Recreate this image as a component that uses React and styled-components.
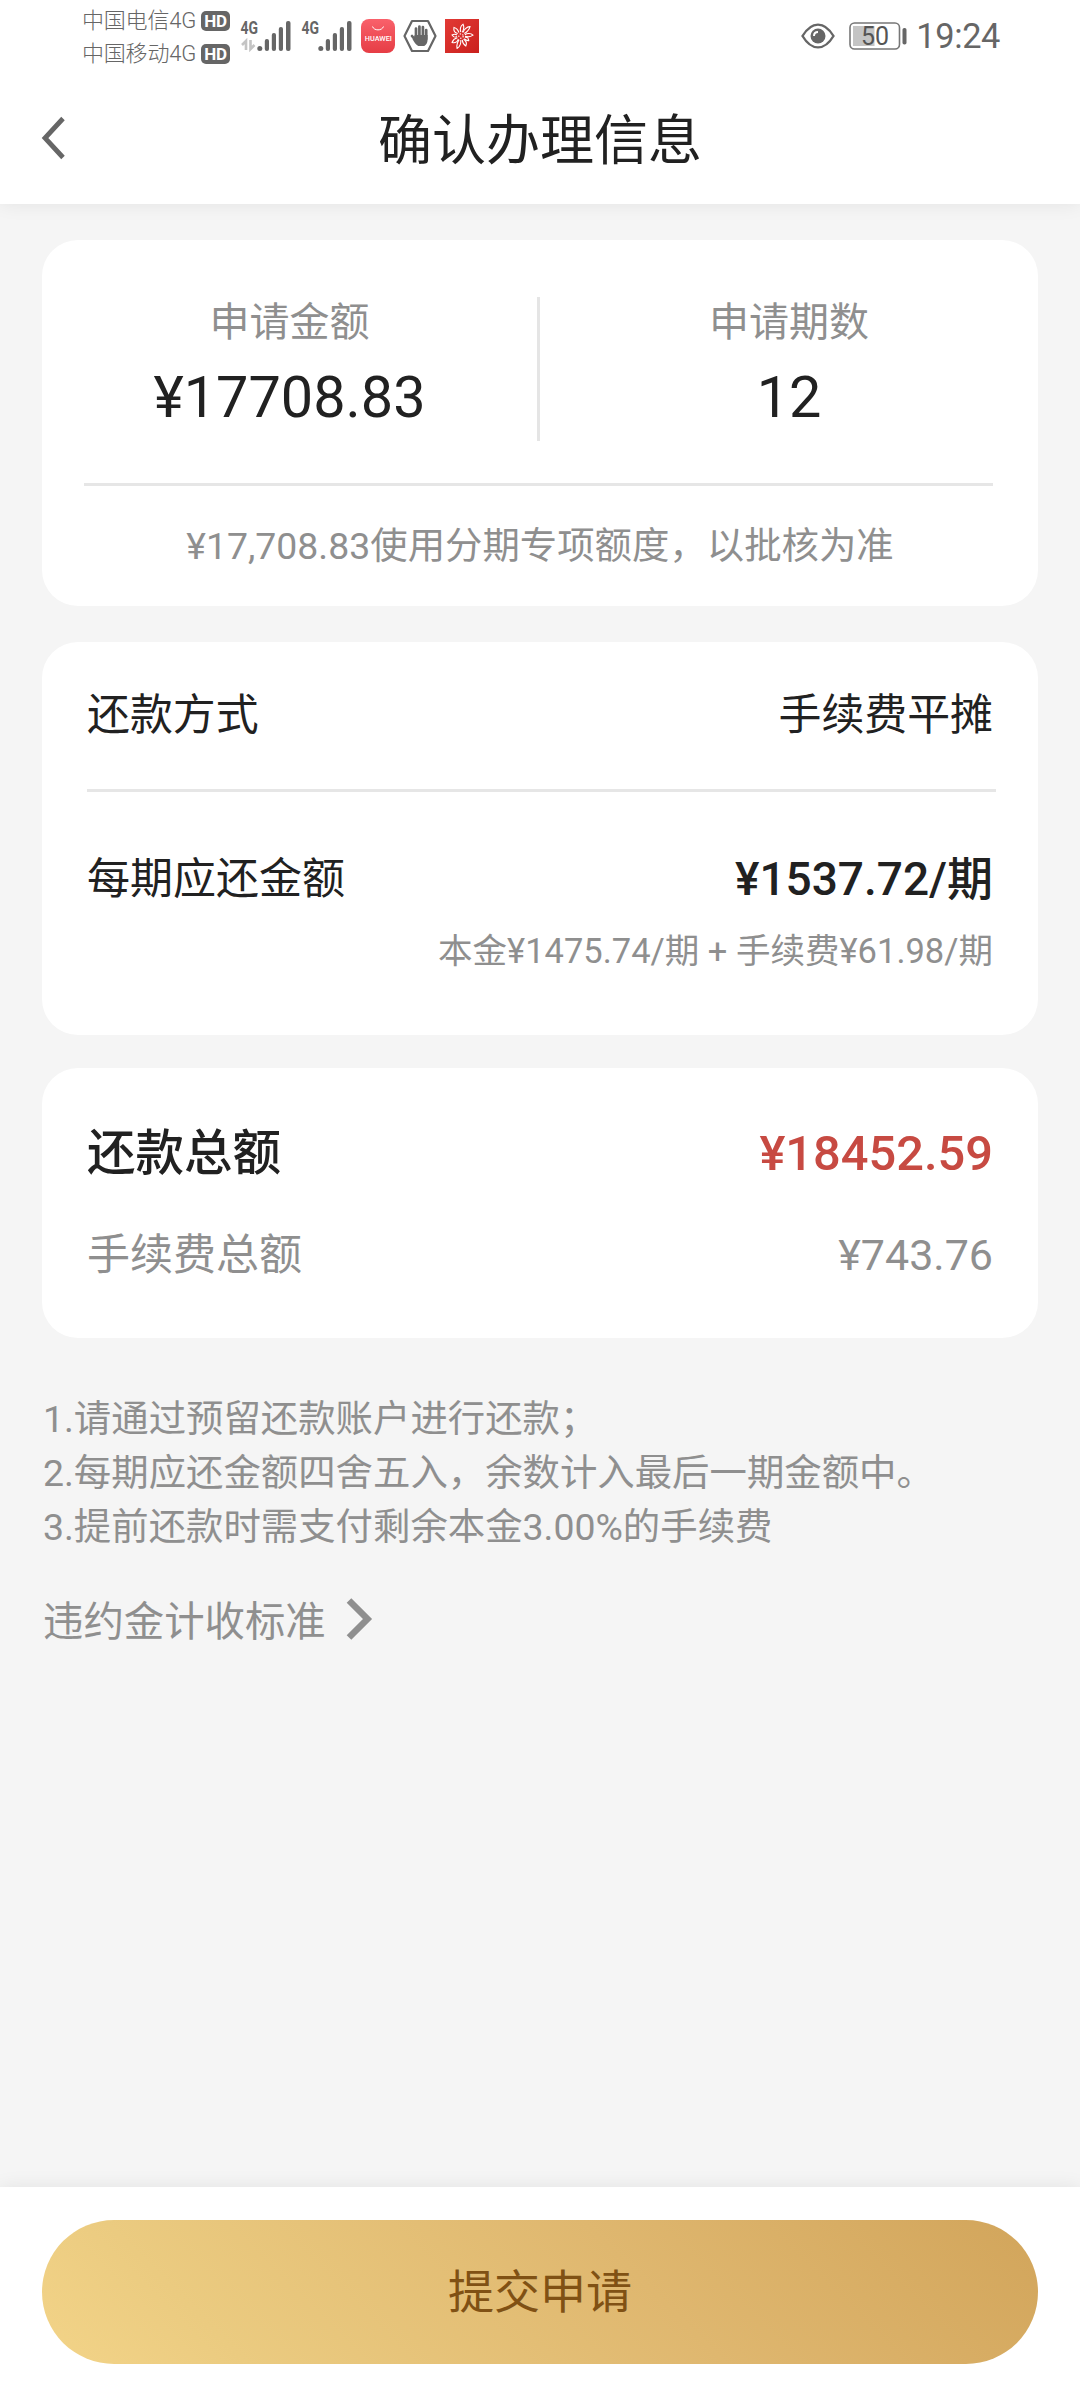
import React from "react";
import styled, { createGlobalStyle } from "styled-components";

const GlobalStyle = createGlobalStyle`
  *, *::before, *::after { box-sizing: border-box; }
  body {
    margin: 0;
    background: #f5f5f5;
    font-family: Roboto, "Noto Sans CJK SC", sans-serif;
    color: #212121;
  }
`;

const Screen = styled.div`
  width: 1080px;
  height: 2400px;
  display: flex;
  flex-direction: column;
  overflow: hidden;
  white-space: nowrap;
`;

const StatusBar = styled.div`
  height: 72px;
  flex: none;
  display: flex;
  align-items: center;
  justify-content: space-between;
  padding: 0 80px 0 82px;
  background: #fff;
  color: #666;
`;

const StatusGroup = styled.div`
  display: flex;
  align-items: center;
  gap: ${(p) => p.$gap || 0}px;
`;

const Carriers = styled.div`
  display: flex;
  flex-direction: column;
  padding-top: 2px;
`;

const Carrier = styled.div`
  height: 33px;
  display: flex;
  align-items: center;
  justify-content: space-between;
  width: 148px;
  font-size: 22px;
  font-weight: 300;
  line-height: 33px;
  letter-spacing: -0.2px;
`;

const HdBadge = styled.span`
  width: 29px;
  height: 20px;
  border-radius: 5px;
  background: #666;
  color: #fff;
  font-size: 17px;
  font-weight: 700;
  line-height: 20px;
  text-align: center;
`;

const Clock = styled.span`
  width: 84px;
  font-size: 34.4px;
  line-height: 40px;
  letter-spacing: -0.4px;
  text-align: right;
`;

const TopArea = styled.div`
  flex: none;
  background: #fff;
  box-shadow: 0 0 18px rgba(0, 0, 0, 0.08);
  z-index: 1;
`;

const Header = styled.header`
  height: 132px;
  display: grid;
  grid-template-columns: 120px 1fr 120px;
  align-items: center;
`;

const BackButton = styled.button`
  border: 0;
  padding: 0 0 0 39px;
  background: none;
  display: flex;
  height: 132px;
  align-items: center;
`;

const Title = styled.h1`
  margin: 0;
  padding-top: 8px;
  font-size: 54px;
  font-weight: 400;
  line-height: 80px;
  text-align: center;
`;

const Content = styled.main`
  flex: 1;
  display: flex;
  flex-direction: column;
  padding: 36px 42px 0;
`;

const Card = styled.section`
  height: ${(p) => p.$height}px;
  margin-bottom: ${(p) => p.$after}px;
  border-radius: 36px;
  background: #fff;
  display: flex;
  flex-direction: column;
`;

const Figures = styled.div`
  height: 243px;
  display: grid;
  grid-template-columns: 495px 3px 1fr;
`;

const Figure = styled.div`
  display: flex;
  flex-direction: column;
  align-items: center;
  padding-top: 53px;
`;

const FigureLabel = styled.span`
  font-size: 40px;
  line-height: 60px;
  color: #8f8f8f;
`;

const FigureValue = styled.span`
  margin-top: 11px;
  font-size: 57.6px;
  line-height: 68px;
`;

const Separator = styled.div`
  height: 144px;
  margin-top: 57px;
  background: #e5e5e5;
`;

const Rule = styled.div`
  height: 3px;
  flex: none;
  margin: 0 ${(p) => p.$right}px 0 ${(p) => p.$left}px;
  background: #e6e6e6;
`;

const QuotaNote = styled.p`
  margin: 0;
  height: 119px;
  font-size: 37.4px;
  line-height: 120px;
  text-align: center;
  color: #8f8f8f;
`;

const Row = styled.div`
  height: ${(p) => p.$height}px;
  margin-top: ${(p) => p.$before || 0}px;
  margin-bottom: ${(p) => p.$after || 0}px;
  padding: 0 45px;
  display: flex;
  justify-content: ${(p) => (p.$end ? "flex-end" : "space-between")};
  align-items: center;
`;

const tones = { dark: "#212121", muted: "#8f8f8f", accent: "#c74a42" };

const Text = styled.span`
  font-size: ${(p) => p.$size}px;
  font-weight: ${(p) => p.$weight || 400};
  line-height: 66px;
  color: ${(p) => tones[p.$tone || "dark"]};
`;

const Terms = styled.ol`
  list-style: none;
  margin: 0;
  padding: 0 0 0 1px;
  font-size: 37.4px;
  line-height: 54px;
  color: #8f8f8f;
`;

const TermsLink = styled.a`
  display: flex;
  align-items: center;
  gap: 18px;
  height: 60px;
  margin-top: 39px;
  padding-left: 1px;
  font-size: 40.4px;
  line-height: 60px;
  color: #8f8f8f;
`;

const ActionBar = styled.footer`
  height: 213px;
  flex: none;
  padding: 33px 42px 0;
  background: #fff;
  box-shadow: 0 0 18px rgba(0, 0, 0, 0.08);
`;

const SubmitButton = styled.button`
  display: block;
  width: 996px;
  height: 144px;
  padding: 0;
  border: 0;
  border-radius: 72px;
  background: linear-gradient(45deg, #f3d488 0%, #ebcb80 18%, #dfb76f 60%, #d2a55b 100%);
  color: #805114;
  font-family: inherit;
  font-size: 46px;
  line-height: 144px;
`;

const Icon = styled.svg`
  display: block;
  flex: none;
  overflow: visible;
`;

const ChevronIcon = styled(Icon)`
  margin-bottom: 8px;
`;

const SignalIcon = ({ traffic }) => (
  <Icon width="52" height="42" viewBox="0 -4 52 42">
    <text x="0.500" y="15" fontFamily="Roboto" fontSize="18.500" fontWeight="700" fill="#666" textLength="17.500" lengthAdjust="spacingAndGlyphs">4G</text>
    {traffic && (
      <g stroke="#c4c4c4" strokeWidth="2.600" fill="none">
        <path d="M6 31V22L2 26" />
        <path d="M10.500 21v9l4-4" />
      </g>
    )}
    <g fill="#666">
      <circle cx="19.800" cy="29.500" r="2.500" />
      <rect x="24.800" y="20" width="4.200" height="12" rx="2" />
      <rect x="31.800" y="14" width="4.200" height="18" rx="2" />
      <rect x="38.800" y="8" width="4.200" height="24" rx="2" />
      <rect x="46" y="2" width="4.500" height="30" rx="2" />
    </g>
  </Icon>
);

const HuaweiIcon = () => (
  <Icon width="34" height="34" viewBox="0 0 34 34">
    <defs>
      <linearGradient id="store" x1="0" y1="0" x2="0" y2="1">
        <stop offset="0" stopColor="#f9616b" />
        <stop offset="1" stopColor="#e63d45" />
      </linearGradient>
    </defs>
    <rect width="34" height="34" rx="8" fill="url(#store)" />
    <path d="M11.500 7.500c1.500 4.500 9.500 4.500 11 0" fill="none" stroke="#fff" strokeWidth="1" />
    <text x="3.800" y="22" fontFamily="Roboto" fontSize="7.500" fontWeight="500" fill="#fff" textLength="27" lengthAdjust="spacingAndGlyphs">HUAWEI</text>
  </Icon>
);

const HandIcon = () => (
  <Icon width="34" height="34" viewBox="0 0 34 34">
    <path d="M9 2h16l7.500 15L25 32H9L1.500 17z" fill="none" stroke="#666" strokeWidth="2.200" strokeLinejoin="round" />
    <g stroke="#666" strokeWidth="2.700" strokeLinecap="round">
      <path d="M13 9.500v9M16.400 7.500v11M19.900 8v11M23.200 11v9M9 17l4.200 5" />
    </g>
    <path d="M11.700 16h12.850v5c0 3-1.500 5-3.300 6h-6c-2.500-1.300-4-4-5.800-7l1.250-1z" fill="#666" />
  </Icon>
);

const petals = [
  [8, 12], [42, 13], [84, 12], [118, 9], [152, 11], [196, 13], [232, 11], [274, 9], [318, 11],
];

const FlowerIcon = () => (
  <Icon width="34" height="34" viewBox="0 0 34 34">
    <defs>
      <linearGradient id="bloom" x1="0" y1="0" x2="1" y2="1">
        <stop offset="0" stopColor="#e23a35" />
        <stop offset="1" stopColor="#ca201d" />
      </linearGradient>
    </defs>
    <rect width="34" height="34" fill="url(#bloom)" />
    <g transform="translate(16 17)" fill="none" stroke="#fff" strokeWidth="1.100">
      {petals.map(([angle, length]) => (
        <path
          key={angle}
          transform={`rotate(${angle})`}
          d={`M-.800-4C-2-6-2.200-${length - 2} .400-${length} 2-${length - 2.5} 1.600-6 .800-4`}
        />
      ))}
      <circle r="2.200" strokeDasharray="1.300 1.400" />
    </g>
  </Icon>
);

const EyeIcon = () => (
  <Icon width="34" height="26" viewBox="0 0 34 26">
    <path d="M1.500 13C6 5.500 11 1.600 17 1.600S28 5.500 32.500 13C28 20.500 23 24.400 17 24.400S6 20.500 1.500 13z" fill="none" stroke="#666" strokeWidth="2.400" />
    <circle cx="17" cy="13" r="7.500" fill="#666" />
    <path d="M13 13c0-2.500 1.500-4 4-4" fill="none" stroke="#fff" strokeWidth="2" />
  </Icon>
);

const BatteryIcon = () => (
  <Icon width="58" height="28" viewBox="0 0 58 28">
    <rect x="1" y="1" width="49.500" height="26" rx="4.500" fill="#fff" stroke="#777" strokeWidth="1.600" />
    <rect x="4" y="4" width="21.500" height="20" fill="#c4c4c4" />
    <text x="26" y="22.800" textAnchor="middle" fontFamily="Roboto" fontSize="25" fill="#555">50</text>
    <rect x="53.500" y="6" width="4" height="16.500" rx="1.800" fill="#666" />
  </Icon>
);

const StatusIcons = styled.div`
  display: flex;
  align-items: center;
  margin-left: 10px;
`;

const Notices = styled.div`
  display: flex;
  gap: 8px;
  margin-left: 8px;
`;

const Signals = styled.div`
  display: flex;
  gap: 9px;
`;

const Power = styled.div`
  display: flex;
  align-items: center;
  gap: 14px;
`;

export default function App() {
  return (
    <Screen>
      <GlobalStyle />
      <TopArea>
        <StatusBar>
          <StatusGroup>
            <Carriers>
              <Carrier>中国电信4G<HdBadge>HD</HdBadge></Carrier>
              <Carrier>中国移动4G<HdBadge>HD</HdBadge></Carrier>
            </Carriers>
            <StatusIcons>
              <Signals>
                <SignalIcon traffic />
                <SignalIcon />
              </Signals>
              <Notices>
                <HuaweiIcon />
                <HandIcon />
                <FlowerIcon />
              </Notices>
            </StatusIcons>
          </StatusGroup>
          <StatusGroup $gap={9}>
            <Power>
              <EyeIcon />
              <BatteryIcon />
            </Power>
            <Clock>19:24</Clock>
          </StatusGroup>
        </StatusBar>

        <Header>
          <BackButton aria-label="返回">
            <Icon width="27" height="42" viewBox="0 0 27 42">
              <path d="M24 1.500 6 21 24 40.500" fill="none" stroke="#666" strokeWidth="4.800" />
            </Icon>
          </BackButton>
          <Title>确认办理信息</Title>
        </Header>
      </TopArea>

      <Content>
        <Card $height={366} $after={36}>
          <Figures>
            <Figure>
              <FigureLabel>申请金额</FigureLabel>
              <FigureValue>¥17708.83</FigureValue>
            </Figure>
            <Separator />
            <Figure>
              <FigureLabel>申请期数</FigureLabel>
              <FigureValue>12</FigureValue>
            </Figure>
          </Figures>
          <Rule $left={42} $right={45} />
          <QuotaNote>¥17,708.83使用分期专项额度，以批核为准</QuotaNote>
        </Card>

        <Card $height={393} $after={33}>
          <Row $height={145} $after={2}>
            <Text $size={42.9}>还款方式</Text>
            <Text $size={42.9}>手续费平摊</Text>
          </Row>
          <Rule $left={45} $right={42} />
          <Row $height={66} $before={54}>
            <Text $size={43}>每期应还金额</Text>
            <Text $size={46} $weight={500}>¥1537.72/期</Text>
          </Row>
          <Row $height={66} $before={6} $end>
            <Text $size={34.5} $tone="muted">本金¥1475.74/期 + 手续费¥61.98/期</Text>
          </Row>
        </Card>

        <Card $height={270} $after={54}>
          <Row $height={66} $before={53}>
            <Text $size={48.5} $weight={500}>还款总额</Text>
            <Text $size={48.8} $weight={500} $tone="accent">¥18452.59</Text>
          </Row>
          <Row $height={66} $before={35}>
            <Text $size={43} $tone="muted">手续费总额</Text>
            <Text $size={43} $tone="muted">¥743.76</Text>
          </Row>
        </Card>

        <Terms>
          <li>1.请通过预留还款账户进行还款；</li>
          <li>2.每期应还金额四舍五入，余数计入最后一期金额中。</li>
          <li>3.提前还款时需支付剩余本金3.00%的手续费</li>
        </Terms>
        <TermsLink>
          违约金计收标准
          <ChevronIcon width="30" height="42" viewBox="0 0 30 42">
            <path d="M5 2.500 23.500 21 5 39.500" fill="none" stroke="#8f8f8f" strokeWidth="6.500" />
          </ChevronIcon>
        </TermsLink>
      </Content>

      <ActionBar>
        <SubmitButton>提交申请</SubmitButton>
      </ActionBar>
    </Screen>
  );
}
